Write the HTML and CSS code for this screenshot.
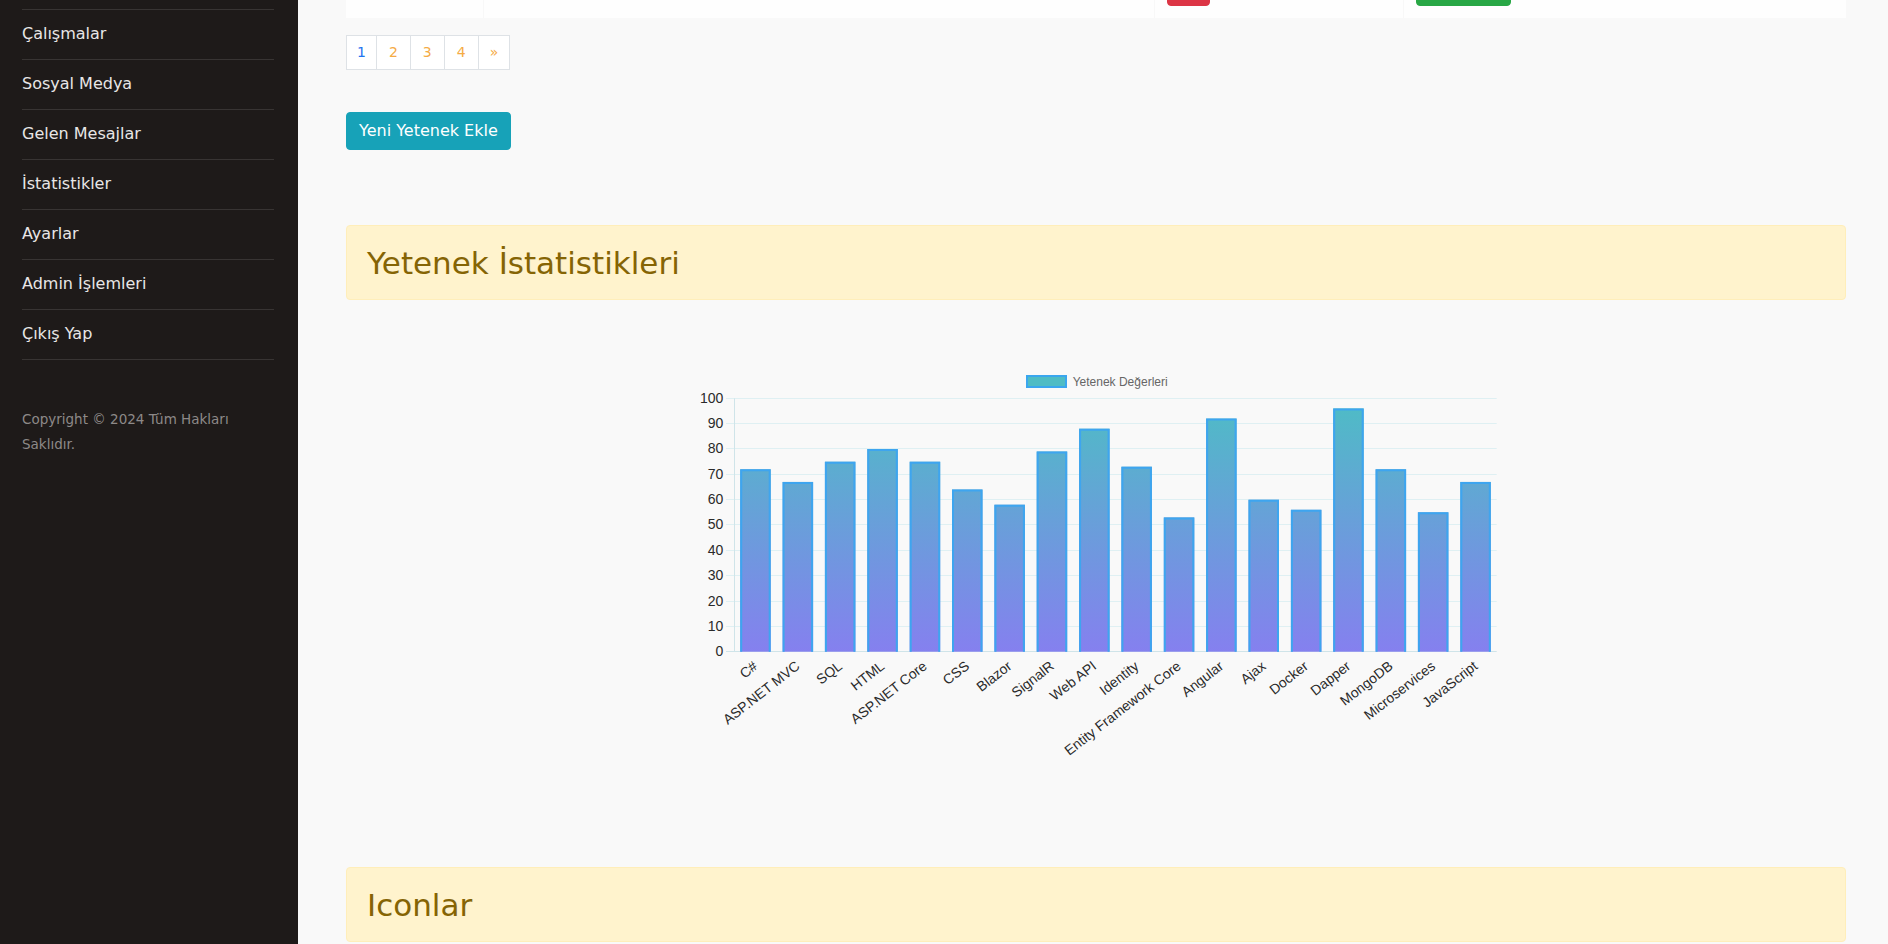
FILE: index.html
```
<!DOCTYPE html>
<html lang="tr">
<head>
<meta charset="utf-8">
<title>Yetenekler</title>
<link rel="stylesheet" href="styles.css">
</head>
<body>
<div class="layout">
  <aside class="sidebar">
    <ul class="side-nav">
      <li class="scrolled-off"></li>
      <li><a href="#">Çalışmalar</a></li>
      <li><a href="#">Sosyal Medya</a></li>
      <li><a href="#">Gelen Mesajlar</a></li>
      <li><a href="#">İstatistikler</a></li>
      <li><a href="#">Ayarlar</a></li>
      <li><a href="#">Admin İşlemleri</a></li>
      <li><a href="#">Çıkış Yap</a></li>
    </ul>
    <p class="copyright">Copyright © 2024 Tüm Hakları Saklıdır.</p>
  </aside>

  <main class="main">
    <div class="table-card">
      <table class="skill-table">
        <colgroup>
          <col class="c1"><col class="c2"><col class="c3"><col class="c4">
        </colgroup>
        <tr>
          <td></td>
          <td></td>
          <td><span class="btn btn-danger btn-del"></span></td>
          <td><span class="btn btn-success btn-upd"></span></td>
        </tr>
      </table>
    </div>

    <ul class="pagination">
      <li><a class="page-link current" href="#">1</a></li>
      <li><a class="page-link" href="#">2</a></li>
      <li><a class="page-link" href="#">3</a></li>
      <li><a class="page-link" href="#">4</a></li>
      <li><a class="page-link next" href="#">»</a></li>
    </ul>

    <a class="btn btn-info add-btn" href="#">Yeni Yetenek Ekle</a>

    <div class="alert alert-stats">
      <h2>Yetenek İstatistikleri</h2>
    </div>

    <div class="chart-wrap">
      <svg class="chart" width="810" height="410" viewBox="0 0 810 410" xmlns="http://www.w3.org/2000/svg">
        <defs>
          <linearGradient id="barGrad" gradientUnits="userSpaceOnUse" x1="0" y1="38.3" x2="0" y2="291.7">
            <stop offset="0" stop-color="#4dbdc5"/>
            <stop offset="1" stop-color="#8580ef"/>
          </linearGradient>
        </defs>

        <!-- legend -->
        <rect x="336" y="16" width="39" height="11" fill="#4fbcc4" stroke="#3aa6ee" stroke-width="2"/>
        <text class="legend-text" x="381.7" y="22" dy=".35em">Yetenek Değerleri</text>

        <!-- grid -->
        <g class="grid">
          <line x1="35" y1="38.5" x2="805.7" y2="38.5"/>
          <line x1="35" y1="63.5" x2="805.7" y2="63.5"/>
          <line x1="35" y1="88.5" x2="805.7" y2="88.5"/>
          <line x1="35" y1="114.5" x2="805.7" y2="114.5"/>
          <line x1="35" y1="139.5" x2="805.7" y2="139.5"/>
          <line x1="35" y1="164.5" x2="805.7" y2="164.5"/>
          <line x1="35" y1="190.5" x2="805.7" y2="190.5"/>
          <line x1="35" y1="215.5" x2="805.7" y2="215.5"/>
          <line x1="35" y1="241.5" x2="805.7" y2="241.5"/>
          <line x1="35" y1="266.5" x2="805.7" y2="266.5"/>
        </g>
        <line class="axis" x1="35" y1="291.5" x2="805.7" y2="291.5"/>
        <line class="axis" x1="43.5" y1="38.3" x2="43.5" y2="291.7"/>

        <!-- y labels -->
        <g class="tick-text y-ticks">
          <text x="32.3" y="38.5" dy=".35em">100</text>
          <text x="32.3" y="63.5" dy=".35em">90</text>
          <text x="32.3" y="88.5" dy=".35em">80</text>
          <text x="32.3" y="114.5" dy=".35em">70</text>
          <text x="32.3" y="139.5" dy=".35em">60</text>
          <text x="32.3" y="164.5" dy=".35em">50</text>
          <text x="32.3" y="190.5" dy=".35em">40</text>
          <text x="32.3" y="215.5" dy=".35em">30</text>
          <text x="32.3" y="241.5" dy=".35em">20</text>
          <text x="32.3" y="266.5" dy=".35em">10</text>
          <text x="32.3" y="291.5" dy=".35em">0</text>
        </g>

        <!-- bars -->
        <g class="bars">
          <rect x="49.2" y="109.3" width="30.5" height="182.4"/>
          <rect x="91.6" y="121.9" width="30.5" height="169.8"/>
          <rect x="133.9" y="101.7" width="30.5" height="190.0"/>
          <rect x="176.3" y="89.0" width="30.5" height="202.7"/>
          <rect x="218.7" y="101.7" width="30.5" height="190.0"/>
          <rect x="261.0" y="129.5" width="30.5" height="162.2"/>
          <rect x="303.4" y="144.7" width="30.5" height="147.0"/>
          <rect x="345.7" y="91.5" width="30.5" height="200.2"/>
          <rect x="388.1" y="68.7" width="30.5" height="223.0"/>
          <rect x="430.4" y="106.7" width="30.5" height="185.0"/>
          <rect x="472.8" y="157.4" width="30.5" height="134.3"/>
          <rect x="515.1" y="58.6" width="30.5" height="233.1"/>
          <rect x="557.5" y="139.7" width="30.5" height="152.0"/>
          <rect x="599.9" y="149.8" width="30.5" height="141.9"/>
          <rect x="642.2" y="48.4" width="30.5" height="243.3"/>
          <rect x="684.6" y="109.3" width="30.5" height="182.4"/>
          <rect x="726.9" y="152.3" width="30.5" height="139.4"/>
          <rect x="769.3" y="121.9" width="30.5" height="169.8"/>
        </g>
        <g class="bar-borders">
          <path d="M50.2 291.7V110.3H78.7V291.7"/>
          <path d="M92.6 291.7V122.9H121.1V291.7"/>
          <path d="M134.9 291.7V102.7H163.4V291.7"/>
          <path d="M177.3 291.7V90.0H205.8V291.7"/>
          <path d="M219.7 291.7V102.7H248.2V291.7"/>
          <path d="M262.0 291.7V130.5H290.5V291.7"/>
          <path d="M304.4 291.7V145.7H332.9V291.7"/>
          <path d="M346.7 291.7V92.5H375.2V291.7"/>
          <path d="M389.1 291.7V69.7H417.6V291.7"/>
          <path d="M431.4 291.7V107.7H459.9V291.7"/>
          <path d="M473.8 291.7V158.4H502.3V291.7"/>
          <path d="M516.1 291.7V59.6H544.6V291.7"/>
          <path d="M558.5 291.7V140.7H587.0V291.7"/>
          <path d="M600.9 291.7V150.8H629.4V291.7"/>
          <path d="M643.2 291.7V49.4H671.7V291.7"/>
          <path d="M685.6 291.7V110.3H714.1V291.7"/>
          <path d="M727.9 291.7V153.3H756.4V291.7"/>
          <path d="M770.3 291.7V122.9H798.8V291.7"/>
        </g>

        <!-- x labels -->
        <g class="tick-text x-ticks">
          <text x="64.5" y="304" dy=".35em" transform="rotate(-38 64.5 304)">C#</text>
          <text x="106.8" y="304" dy=".35em" transform="rotate(-38 106.8 304)">ASP.NET MVC</text>
          <text x="149.2" y="304" dy=".35em" transform="rotate(-38 149.2 304)">SQL</text>
          <text x="191.5" y="304" dy=".35em" transform="rotate(-38 191.5 304)">HTML</text>
          <text x="233.9" y="304" dy=".35em" transform="rotate(-38 233.9 304)">ASP.NET Core</text>
          <text x="276.3" y="304" dy=".35em" transform="rotate(-38 276.3 304)">CSS</text>
          <text x="318.6" y="304" dy=".35em" transform="rotate(-38 318.6 304)">Blazor</text>
          <text x="361.0" y="304" dy=".35em" transform="rotate(-38 361.0 304)">SignalR</text>
          <text x="403.3" y="304" dy=".35em" transform="rotate(-38 403.3 304)">Web API</text>
          <text x="445.7" y="304" dy=".35em" transform="rotate(-38 445.7 304)">Identity</text>
          <text x="488.0" y="304" dy=".35em" transform="rotate(-38 488.0 304)">Entity Framework Core</text>
          <text x="530.4" y="304" dy=".35em" transform="rotate(-38 530.4 304)">Angular</text>
          <text x="572.7" y="304" dy=".35em" transform="rotate(-38 572.7 304)">Ajax</text>
          <text x="615.1" y="304" dy=".35em" transform="rotate(-38 615.1 304)">Docker</text>
          <text x="657.5" y="304" dy=".35em" transform="rotate(-38 657.5 304)">Dapper</text>
          <text x="699.8" y="304" dy=".35em" transform="rotate(-38 699.8 304)">MongoDB</text>
          <text x="742.2" y="304" dy=".35em" transform="rotate(-38 742.2 304)">Microservices</text>
          <text x="784.5" y="304" dy=".35em" transform="rotate(-38 784.5 304)">JavaScript</text>
        </g>
      </svg>
    </div>

    <div class="alert alert-icons">
      <h2>Iconlar</h2>
    </div>
  </main>
</div>
</body>
</html>
```

FILE: styles.css
```
html, body {
  margin: 0;
  padding: 0;
  height: 944px;
  overflow: hidden;
}

body {
  font-family: "DejaVu Sans", "Open Sans", sans-serif;
  background: #f9f9f9;
  color: #212529;
}

a {
  text-decoration: none;
}

.layout {
  display: flex;
  height: 944px;
}

/* ---------- sidebar ---------- */
.sidebar {
  flex: 0 0 298px;
  background: #1e1a19;
  padding: 0 24px 0 22px;
  box-sizing: border-box;
}

.side-nav {
  list-style: none;
  margin: -40px 0 0;
  padding: 0;
}

.side-nav li {
  border-bottom: 1px solid #383433;
}

.side-nav .scrolled-off {
  height: 49px;
}

.side-nav a {
  display: block;
  padding: 11px 0 13px;
  line-height: 25px;
  font-size: 16px;
  color: #e8e6e6;
}

.copyright {
  margin: 47px 0 0;
  font-size: 13.5px;
  line-height: 24.5px;
  color: #8d8988;
}

/* ---------- main ---------- */
.main {
  flex: 1;
  min-width: 0;
  padding: 0 42px 0 48px;
  display: flex;
  flex-direction: column;
  align-items: flex-start;
}

.table-card {
  align-self: stretch;
  margin-top: -44px;
  background: #fefefe;
}

.skill-table {
  width: 100%;
  border-collapse: collapse;
  table-layout: fixed;
}

.skill-table .c1 { width: 137px; }
.skill-table .c2 { width: 671px; }
.skill-table .c3 { width: 249px; }

.skill-table td {
  padding: 12px;
  height: 38px;
  border-left: 1px solid #f8f8f8;
  vertical-align: middle;
}

.skill-table td:first-child {
  border-left: 0;
}

.btn {
  display: inline-block;
  box-sizing: border-box;
  height: 38px;
  padding: 6px 12px;
  font-size: 16px;
  line-height: 24px;
  border: 1px solid transparent;
  border-radius: 4px;
  color: #fff;
  white-space: nowrap;
  vertical-align: middle;
}

.btn-del { width: 43px; }
.btn-upd { width: 95px; }

.btn-danger { background: #dc3545; border-color: #dc3545; }
.btn-success { background: #28a745; border-color: #28a745; }
.btn-info { background: #17a2b8; border-color: #17a2b8; }

/* pagination */
.pagination {
  list-style: none;
  display: flex;
  margin: 17px 0 0;
  padding: 0;
}

.pagination li + li {
  margin-left: -1px;
}

.page-link {
  display: block;
  padding: 8px 12px;
  font-size: 14px;
  line-height: 17px;
  color: #f5ab45;
  background: #fff;
  border: 1px solid #dee2e6;
}

.page-link.current {
  padding: 8px 10px;
  color: #1f74f0;
}

.page-link.next {
  padding: 8px 11px;
}

.add-btn {
  margin-top: 42px;
}

/* alerts */
.alert {
  align-self: stretch;
  box-sizing: border-box;
  padding: 12px 20px 10px;
  background: #fff3cd;
  border: 1px solid #ffeeba;
  border-radius: 4px;
  color: #856404;
}

.alert h2 {
  margin: 0;
  font-size: 31px;
  font-weight: 400;
  line-height: 51px;
  color: #856404;
}

.alert-stats {
  margin-top: 75px;
}

.alert-icons {
  margin-top: 97px;
  flex: none;
}

/* chart */
.chart-wrap {
  align-self: stretch;
  display: flex;
  justify-content: center;
  margin-top: 60px;
}

.chart {
  display: block;
  flex: none;
}

.chart .grid line {
  stroke: #dff0f3;
  stroke-width: 1;
}

.chart .axis {
  stroke: #cfe4e9;
  stroke-width: 1;
}

.chart .bars rect {
  fill: url(#barGrad);
}

.chart .bar-borders path {
  fill: none;
  stroke: #3ea5ef;
  stroke-width: 2;
}

.chart .tick-text text {
  font-family: "Liberation Sans", Arial, sans-serif;
  font-size: 14px;
  fill: #2a2a2a;
}

.chart .y-ticks text,
.chart .x-ticks text {
  text-anchor: end;
}

.chart .legend-text {
  font-family: "Liberation Sans", Arial, sans-serif;
  font-size: 12px;
  fill: #666;
}
```
